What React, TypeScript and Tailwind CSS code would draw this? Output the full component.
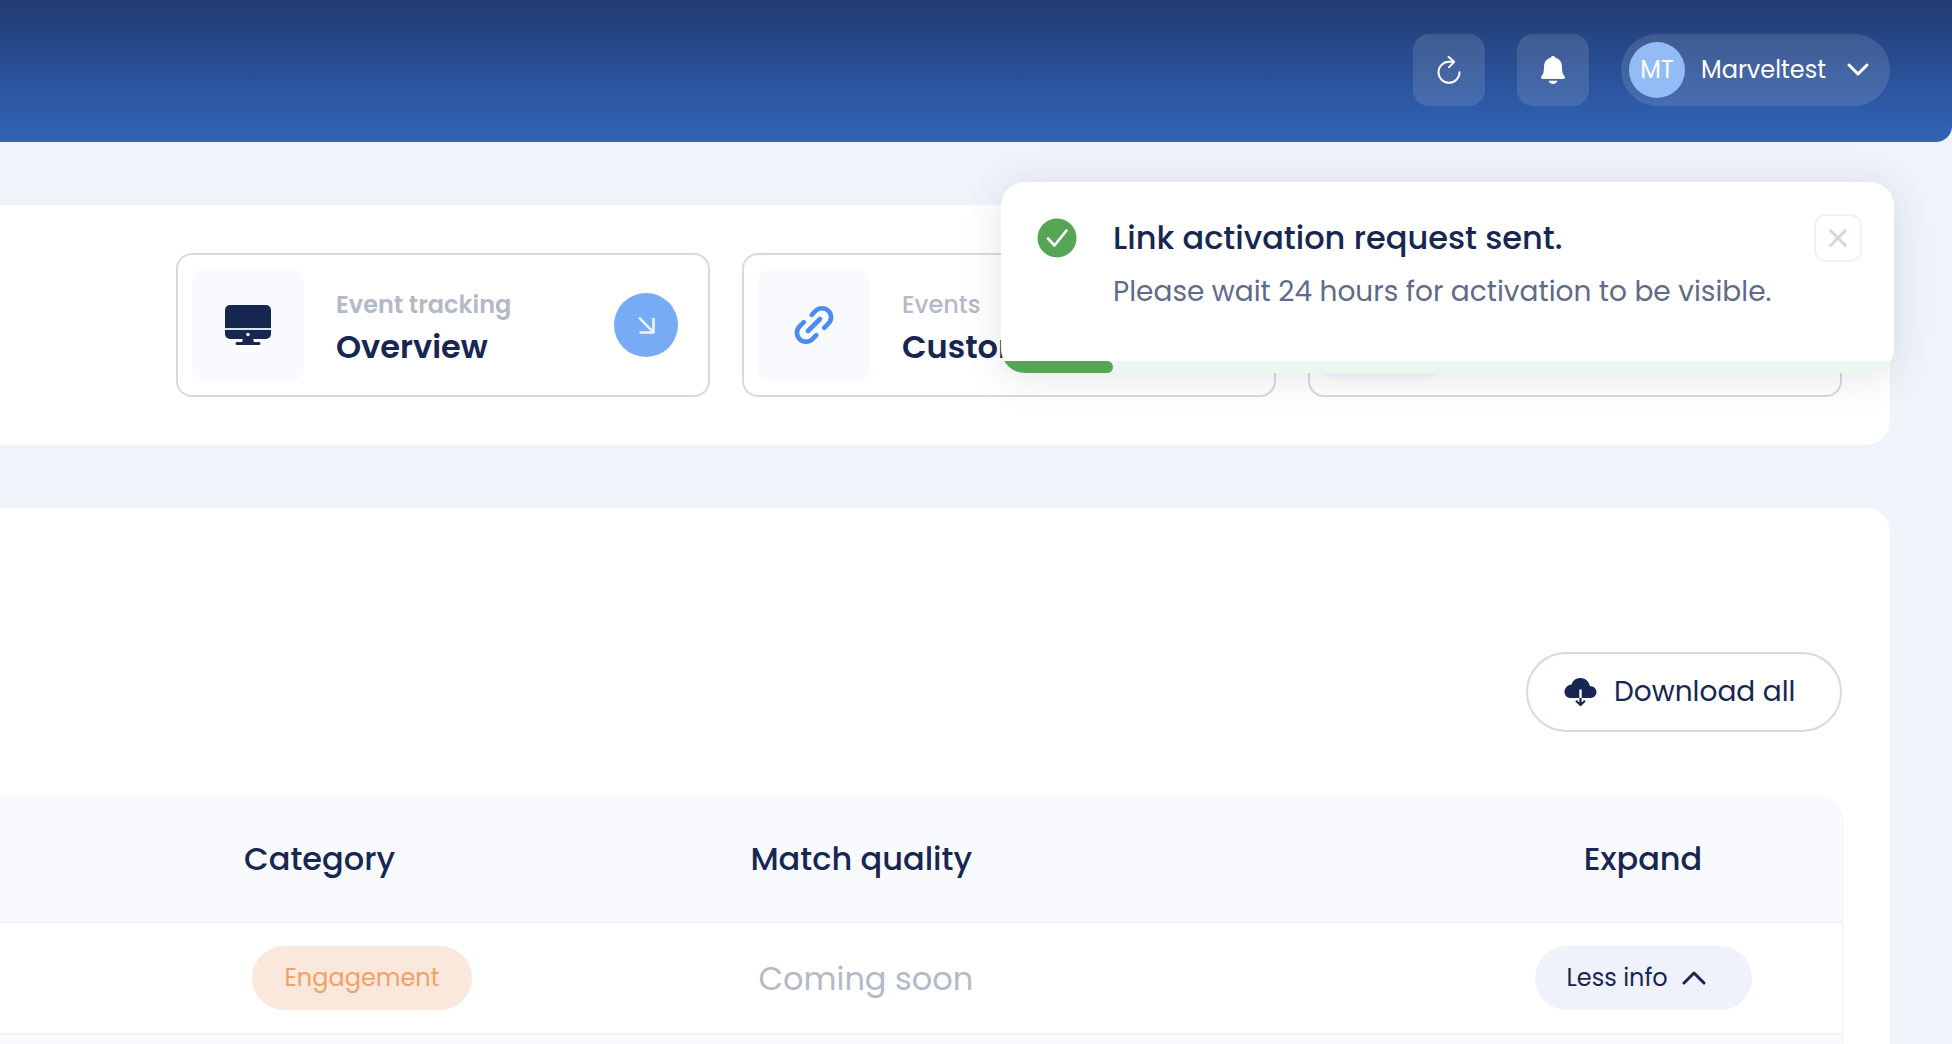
import { useState } from 'react';

interface TrackingCard { id: string; label?: string; title?: string; icon?: 'monitor' | 'link'; strong?: boolean; }
interface EventRow { id: string; category: string; quality: string; }

const cards: TrackingCard[] = [
  { id: 'overview', label: 'Event tracking', title: 'Overview', icon: 'monitor', strong: true },
  { id: 'custom', label: 'Events', title: 'Custom', icon: 'link' },
  { id: 'more' },
];

const rows: EventRow[] = [{ id: 'engagement', category: 'Engagement', quality: 'Coming soon' }];

function RefreshIcon() {
  return (
    <svg width="24" height="30" viewBox="0 0 24 30" fill="none" stroke="currentColor" strokeWidth="2" strokeLinecap="round" strokeLinejoin="round">
      <path d="M22.500 17.300A10.500 10.500 0 1 1 12 6.800h5" />
      <path d="M11.500 1.800l5.500 5-5 5.500" />
    </svg>
  );
}

function BellIcon() {
  return (
    <svg width="26" height="30" viewBox="0 0 26 30" fill="currentColor">
      <path d="M13 1c1.200 0 2 .7 2.300 1.700C19.800 3.800 22 7.500 22 12c0 5 .8 7.300 2.600 9.200.9 1.200.2 2.800-1.300 2.800H2.700C1.200 24 .5 22.400 1.400 21.200 3.200 19.300 4 17 4 12c0-4.500 2.200-8.200 6.700-9.300C11 1.700 11.800 1 13 1z" />
      <path d="M8.500 25.700h9c-.6 1.900-2.300 3.300-4.500 3.300s-3.900-1.400-4.500-3.300z" />
    </svg>
  );
}

function MonitorIcon() {
  return (
    <svg width="46" height="40" viewBox="0 0 46 40">
      <rect x="0" y="0" width="46" height="34" rx="5" fill="#172752" />
      <rect x="0" y="23" width="46" height="2" fill="#dfe3ec" />
      <circle cx="23" cy="29.500" r="1.700" fill="#fff" />
      <path d="M18 33h10l.8 4H34a1.500 1.500 0 0 1 0 3H12a1.500 1.500 0 0 1 0-3h5.200z" fill="#172752" />
    </svg>
  );
}

function LinkIcon() {
  return (
    <svg width="40" height="40" viewBox="0 0 40 40" fill="none" stroke="#4a8cf0" strokeWidth="4.600" strokeLinecap="round" strokeLinejoin="round">
      <path d="M17.700 9.800L21.600 5.900A9 9 0 0 1 34.400 18.700L30.200 22.900" />
      <path d="M22.300 30.200L18.400 34.100A9 9 0 0 1 5.600 21.300L9.800 17.100" />
      <path d="M14 26L26 14" />
    </svg>
  );
}

function CloudDownloadIcon() {
  return (
    <svg width="34" height="30" viewBox="0 0 34 30" fill="none">
      <path d="M6.500 21C3 21 .5 18.200 .5 14.700S3.500 8 7.500 7.500C9 3 12.500 1 16.500 1c4.500 0 8.300 3 9.500 8.200 3.800-.3 6.500 2.500 6.500 5.900S29.900 21 26.500 21z" fill="#172752" />
      <path d="M16.500 12.500V21" stroke="#fff" strokeWidth="2.400" />
      <path d="M16.500 21v7.500M12 23.800l4.500 4.200 4.500-4.200" stroke="#172752" strokeWidth="2.200" strokeLinejoin="round" />
    </svg>
  );
}

function Header() {
  return (
    <header className="flex h-[142px] items-start justify-end gap-8 rounded-br-2xl bg-linear-to-b from-[#213b72] to-[#3061b3] to-90% pt-[34px] pr-[62px] text-white">
      <button aria-label="Refresh" className="flex size-18 items-center justify-center rounded-2xl bg-white/12">
        <RefreshIcon />
      </button>
      <button aria-label="Notifications" className="flex size-18 items-center justify-center rounded-2xl bg-white/12">
        <BellIcon />
      </button>
      <button className="flex h-18 w-[269px] items-center rounded-full bg-white/12 pr-5 pl-2">
        <span className="flex size-14 items-center justify-center rounded-full bg-[#93bcf6] text-2xl">MT</span>
        <span className="ml-4 flex-1 text-left text-2xl">Marveltest</span>
        <svg width="24" height="16" viewBox="0 0 24 16" fill="none" stroke="currentColor" strokeWidth="3" strokeLinecap="round" strokeLinejoin="round">
          <path d="M3 3l9 9 9-9" />
        </svg>
      </button>
    </header>
  );
}

function Card({ card }: { card: TrackingCard }) {
  return (
    <a href="#" aria-label={card.title ?? 'More'} className="flex h-36 w-[534px] shrink-0 items-center rounded-2xl border-2 border-[#d3dae3] pr-[30px] pl-3.5">
      <span className="flex size-28 items-center justify-center rounded-xl bg-[#f9fafe]">
        {card.icon === 'monitor' && <MonitorIcon />}
        {card.icon === 'link' && <LinkIcon />}
      </span>
      <span className="ml-8 flex flex-1 flex-col pt-2">
        {card.label && <span className={`text-2xl leading-9 text-[#b1bac6] ${card.strong ? 'font-semibold' : 'font-medium'}`}>{card.label}</span>}
        {card.title && <span className="text-[32px] leading-12 font-semibold whitespace-nowrap text-[#172752]">{card.title}</span>}
      </span>
      <span className="flex size-16 shrink-0 items-center justify-center rounded-full bg-[#78abf5]">
        <svg width="20" height="20" viewBox="0 0 20 20" fill="none" stroke="#f3f7ff" strokeWidth="2.500">
          <path d="M3 2.500L17 17M17.500 3v14.500H3.500" />
        </svg>
      </span>
    </a>
  );
}

function Toast({ onClose }: { onClose: () => void }) {
  return (
    <div role="status" className="absolute top-[182px] right-[58px] w-[893px] overflow-hidden rounded-3xl bg-white shadow-[0_4px_40px_rgba(30,40,60,0.12)]">
      <div className="flex h-[179px] items-start pt-8 pr-8 pl-9">
        <svg className="mt-1 shrink-0" width="40" height="40" viewBox="0 0 40 40" fill="none">
          <circle cx="20" cy="20" r="19.500" fill="#55a555" />
          <path d="M11 20.500l6.500 7L29.500 12.500" stroke="#fff" strokeWidth="2.600" strokeLinecap="round" strokeLinejoin="round" />
        </svg>
        <div className="ml-9 flex-1">
          <p className="text-[32px] leading-12 font-medium text-[#172752]">Link activation request sent.</p>
          <p className="mt-2 text-[28px] leading-11 text-[#5f6b8a]">Please wait 24 hours for activation to be visible.</p>
        </div>
        <button aria-label="Close" onClick={onClose} className="flex size-12 shrink-0 items-center justify-center rounded-xl border-2 border-[#eef1f9]">
          <svg width="20" height="20" viewBox="0 0 20 20" fill="none" stroke="#d0d8e2" strokeWidth="3" strokeLinecap="round">
            <path d="M2.500 2.500l15 15M17.500 2.500l-15 15" />
          </svg>
        </button>
      </div>
      <div className="h-3 bg-[#ebf6ee]">
        <div className="h-3 w-1/8 rounded-r-md bg-[#55a555]" />
      </div>
    </div>
  );
}

export default function App() {
  const [showToast, setShowToast] = useState(true);

  return (
    <div className="relative h-screen overflow-hidden bg-[#eff3fa] font-['Poppins','Inter',sans-serif]">
      <Header />
      <main className="mt-[63px] mr-[62px] flex flex-col gap-[63px]">
        <section className="flex justify-end gap-8 rounded-r-3xl bg-white py-12 pr-12">
          {cards.map(card => <Card key={card.id} card={card} />)}
        </section>
        <section className="rounded-tr-3xl bg-white pt-36 pr-[46px] pb-24">
          <div className="flex justify-end pr-0.5">
            <button className="flex h-20 w-[316px] items-center gap-4 rounded-full border-2 border-[#d3dae3] pl-9 text-[28px] text-[#172752]">
              <CloudDownloadIcon />
              Download all
            </button>
          </div>
          <div className="mt-[61px] overflow-hidden rounded-tr-4xl border-r-2 border-[#f6f7fd] bg-[#f9fafe] pb-24">
            <table className="w-full table-fixed text-left text-[#172752]">
              <thead>
                <tr className="h-[129px] border-b-2 border-[#eff2f9] text-[32px]">
                  <th className="w-[39%] pt-1 pl-[244px] font-medium">Category</th>
                  <th className="pt-1 pl-8 font-medium">Match quality</th>
                  <th className="w-[398px] pt-1 text-center font-medium">Expand</th>
                </tr>
              </thead>
              <tbody>
                {rows.map(row => (
                  <tr key={row.id} className="h-28 border-b-2 border-[#eff2f9] bg-white">
                    <td className="pl-[252px]">
                      <span className="inline-flex h-16 w-[220px] items-center justify-center rounded-full bg-[#fbe8dc] align-middle text-2xl text-[#f0a069]">{row.category}</span>
                    </td>
                    <td className="pt-0.5 pl-10 text-[32px] text-[#b1bac6]">{row.quality}</td>
                    <td className="text-center">
                      <button className="inline-flex h-16 w-[217px] items-center gap-3.5 rounded-full bg-[#eff2fa] pl-8 align-middle text-2xl">
                        Less info
                        <svg width="24" height="16" viewBox="0 0 24 16" fill="none" stroke="currentColor" strokeWidth="3" strokeLinecap="round" strokeLinejoin="round">
                          <path d="M2 13L12 3l10 10" />
                        </svg>
                      </button>
                    </td>
                  </tr>
                ))}
              </tbody>
            </table>
          </div>
        </section>
      </main>
      {showToast && <Toast onClose={() => setShowToast(false)} />}
    </div>
  );
}
